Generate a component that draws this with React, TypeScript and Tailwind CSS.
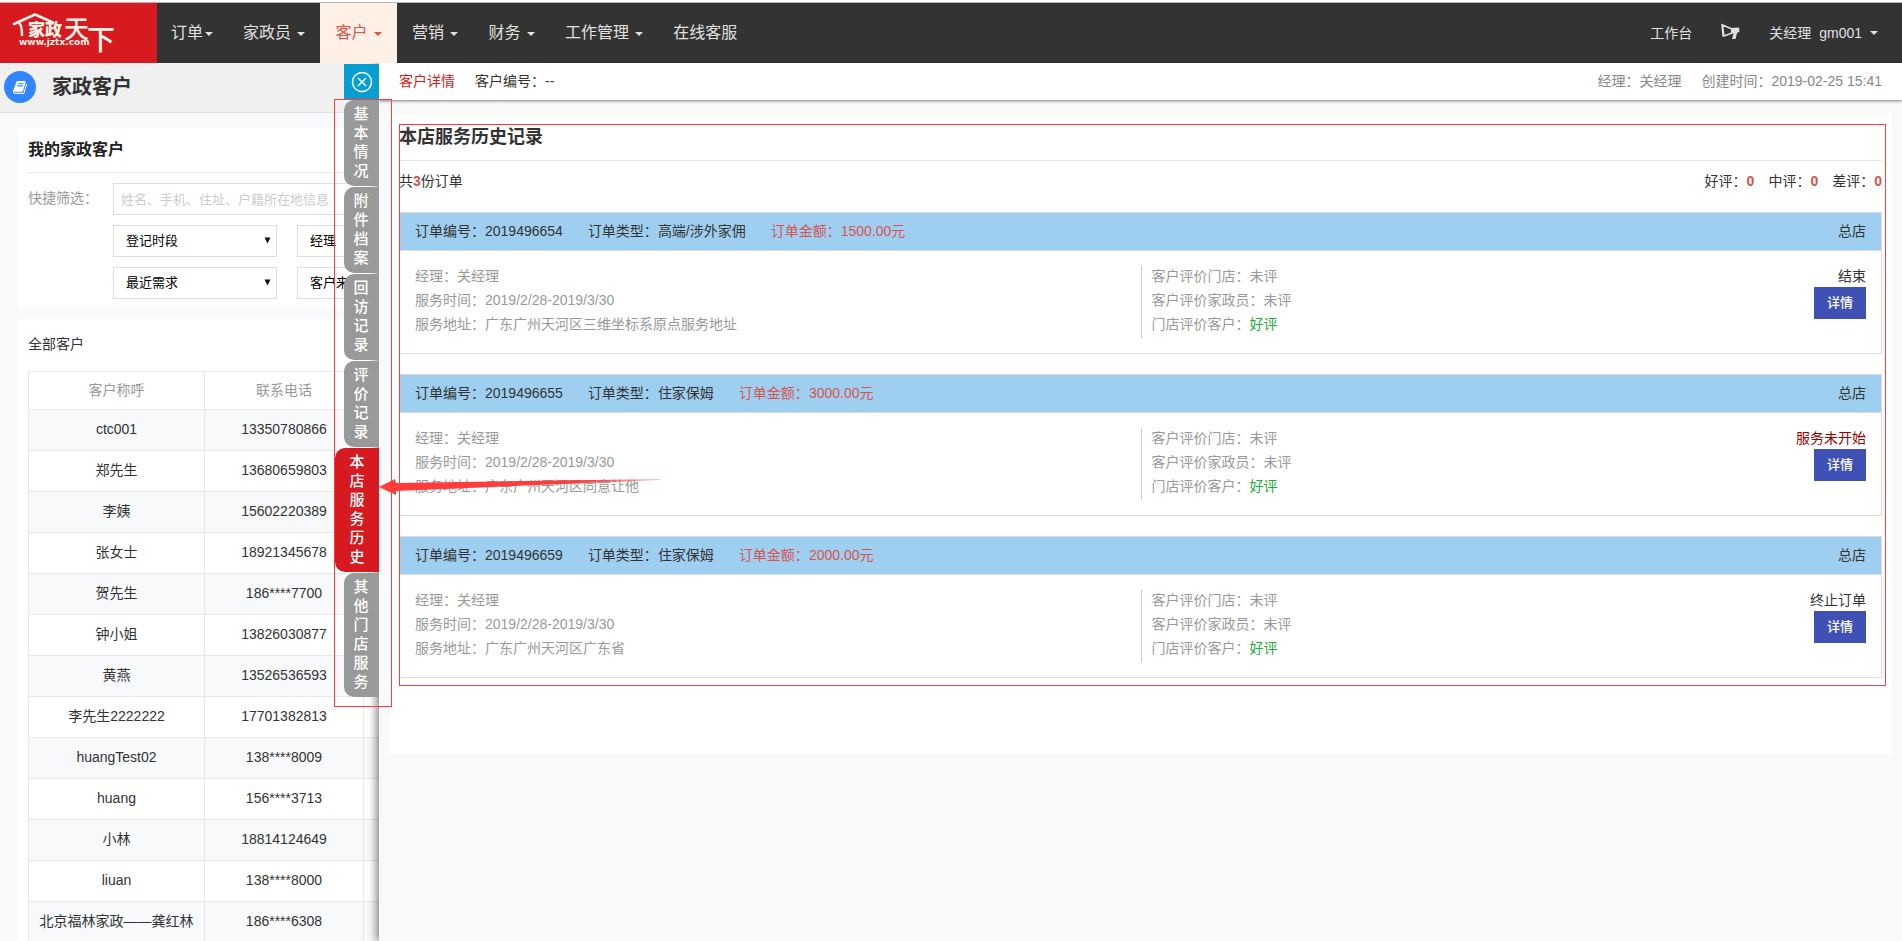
import React from 'react';

const menus = [
  { name: '家政员', active: false },
  { name: '客户', active: true },
  { name: '营销', active: false },
  { name: '财务', active: false },
  { name: '工作管理', active: false },
];

const customers = [
  ['ctc001', '13350780866'],
  ['郑先生', '13680659803'],
  ['李姨', '15602220389'],
  ['张女士', '18921345678'],
  ['贺先生', '186****7700'],
  ['钟小姐', '13826030877'],
  ['黄燕', '13526536593'],
  ['李先生2222222', '17701382813'],
  ['huangTest02', '138****8009'],
  ['huang', '156****3713'],
  ['小林', '18814124649'],
  ['liuan', '138****8000'],
  ['北京福林家政——龚红林', '186****6308'],
];

const tabs = [
  { name: '基本情况', active: false },
  { name: '附件档案', active: false },
  { name: '回访记录', active: false },
  { name: '评价记录', active: false },
  { name: '本店服务历史', active: true },
  { name: '其他门店服务', active: false },
];

const orders = [
  {
    id: '2019496654',
    type: '高端/涉外家佣',
    amount: '1500.00元',
    address: '广东广州天河区三维坐标系原点服务地址',
    status: '结束',
    statusClass: 'text-[#333]',
  },
  {
    id: '2019496655',
    type: '住家保姆',
    amount: '3000.00元',
    address: '广东广州天河区同意让他',
    status: '服务未开始',
    statusClass: 'text-[#990000]',
  },
  {
    id: '2019496659',
    type: '住家保姆',
    amount: '2000.00元',
    address: '广东广州天河区广东省',
    status: '终止订单',
    statusClass: 'text-[#333]',
  },
];

const Caret = () => (
  <span className="ml-0.5 inline-block border-x-4 border-t-4 border-x-transparent border-t-current align-middle" />
);

const Logo = () => (
  <svg width="157" height="60" viewBox="0 0 157 60" role="img" aria-label="家政天下">
    <path
      d="M14 21 L35 11.500 L53 19.500 M19 20 Q22 22 22 32"
      fill="none"
      stroke="#fff3e6"
      strokeWidth="2.500"
      strokeLinecap="round"
      strokeLinejoin="round"
    />
    <g fill="#fff3e6" fontFamily='"Noto Sans CJK SC", sans-serif'>
      <text x="28" y="33" fontSize="17" fontWeight="900">家政</text>
      <text x="64" y="35" fontSize="25" fontWeight="500">天</text>
      <text x="87" y="47" fontSize="28" fontWeight="500">下</text>
    </g>
    <text x="19" y="42" fontSize="9" fontFamily='"DejaVu Sans", sans-serif' fontWeight="700" fill="#fff3e6">
      www.jztx.com
    </text>
  </svg>
);

const Header = () => (
  <header className="relative z-20 flex h-[61px] shrink-0 border-t border-[#b5b5b5] bg-[#333] text-[#e0e0e0]">
    <a href="#home" className="block w-[157px] shrink-0 bg-[#d71920]">
      <Logo />
    </a>
    <nav className="flex text-base">
      <button className="pr-[15px] pl-3.5">
        订单
        <Caret />
      </button>
      {menus.map((item) => (
        <button key={item.name} className={`px-[15px] ${item.active ? 'bg-[#fff0e6] text-[#d9534f]' : ''}`}>
          {item.name} <Caret />
        </button>
      ))}
      <a href="#service" className="flex items-center px-[15px]">
        在线客服
      </a>
    </nav>
    <div className="ml-auto flex items-center pr-6 text-sm">
      <a href="#desk">工作台</a>
      <button className="mx-7 pb-0.5" aria-label="公告">
        <svg width="21" height="18" viewBox="0 0 21 18" className="block">
          <path d="M2.500 2 L12 6 L12 10 L4 13 Z" fill="none" stroke="#e0e0e0" strokeWidth="1.500" strokeLinejoin="round" />
          <path d="M2 1.500 L3 13" stroke="#e0e0e0" strokeWidth="1.500" strokeLinecap="round" />
          <path d="M11 5 L19 4.500 L19.500 8.500 L17 10 L15.500 16 L12 16 L13.500 10.500 L11 10 Z" fill="#e0e0e0" />
        </svg>
      </button>
      <button className="flex items-center">
        <span className="mr-2">关经理</span>
        <span className="mr-1.5">gm001</span>
        <Caret />
      </button>
    </div>
  </header>
);

const FilterSelect = ({ label }: { label: string }) => (
  <div className="relative w-[164px]">
    <select
      aria-label={label}
      className="h-8 w-full appearance-none border border-[#ddd] bg-white px-3 text-[13px] text-black"
    >
      <option>{label}</option>
    </select>
    <svg width="7" height="7" viewBox="0 0 7 7" className="pointer-events-none absolute top-3 right-1.5">
      <path d="M0.500 0.500 H6.500 L3.500 6.500 Z" fill="#111" />
    </svg>
  </div>
);

const CustomerPage = () => (
  <main className="w-[379px] shrink-0 overflow-hidden bg-[#f7f9fb]">
    <div className="flex h-[50px] w-[1000px] items-center gap-4 border-b border-[#e3e3e3] bg-[#f0f0f0] pb-px pl-1">
      <span className="flex size-8 items-center justify-center rounded-full bg-[#3385ff]">
        <svg width="15" height="15" viewBox="0 0 1792 1792" fill="#fff">
          <path d="M1639 478q40 57 18 129l-275 906q-19 64-76.500 107.500t-122.500 43.500h-923q-77 0-148.500-53.500t-99.500-131.500q-24-67-2-127 0-4 3-27t4-37q1-8-3-21.500t-3-19.500q2-11 8-21t16.500-23.500 16.500-23.500q23-38 45-91.500t30-91.500q3-10 .5-30t-.5-28q3-11 17-28t17-23q21-36 42-92t25-90q1-9-2.500-32t.5-28q4-13 22-30.500t22-22.500q19-26 42.500-84.500t27.500-96.500q1-8-3-25.500t-2-26.500q2-8 9-18t18-23 17-21q8-12 16.500-30.500t15-35 16-36 19.500-32 26.500-23.500 36-11.500 47.500 5.500l-1 3q38-9 51-9h761q74 0 114 56t18 130l-274 906q-36 119-71.500 153.500t-128.500 34.500h-869q-27 0-38 15-11 16-1 43 24 70 144 70h923q29 0 56-15.500t35-41.500l300-987q7-22 5-57 38 15 59 43zm-1064 2q-4 13 2 22.500t20 9.500h608q13 0 25.500-9.500t16.500-22.500l21-64q4-13-2-22.500t-20-9.500h-608q-13 0-25.500 9.500t-16.500 22.500zm-83 256q-4 13 2 22.500t20 9.500h608q13 0 25.500-9.500t16.500-22.500l21-64q4-13-2-22.500t-20-9.500h-608q-13 0-25.500 9.500t-16.500 22.500z" />
        </svg>
      </span>
      <h1 className="text-xl font-bold">家政客户</h1>
    </div>

    {/* 筛选 */}
    <section className="mt-[15px] ml-[18px] w-[1000px] bg-white px-2.5 pb-2.5">
      <h2 className="border-b border-[#e8e8e8] py-2.5 text-base leading-6 font-bold text-[#222]">我的家政客户</h2>
      <div className="mt-2.5 flex">
        <label htmlFor="keyword" className="w-[85px] pt-[5px] leading-5 text-[#999]">
          快捷筛选：
        </label>
        <div className="flex flex-col gap-2.5">
          <input
            id="keyword"
            type="text"
            placeholder="姓名、手机、住址、户籍所在地信息"
            className="h-8 w-[348px] border border-[#ddd] px-[7px] text-[13px] placeholder:text-[#ccc]"
          />
          <div className="flex gap-5">
            <FilterSelect label="登记时段" />
            <FilterSelect label="经理" />
          </div>
          <div className="flex gap-5">
            <FilterSelect label="最近需求" />
            <FilterSelect label="客户来源" />
          </div>
        </div>
      </div>
    </section>

    {/* 客户列表 */}
    <section className="mt-2.5 ml-[18px] w-[1000px] bg-white px-2.5 pt-[15px]">
      <h3 className="leading-5">全部客户</h3>
      <table className="mt-[17px] w-full table-fixed border-collapse text-center">
        <thead>
          <tr className="h-[38px] text-[#999]">
            <th className="w-44 border border-[#e8e8e8] pb-0.5 font-normal">客户称呼</th>
            <th className="w-[159px] border border-[#e8e8e8] pb-0.5 font-normal">联系电话</th>
            <th className="border border-[#e8e8e8]"></th>
          </tr>
        </thead>
        <tbody>
          {customers.map(([name, phone]) => (
            <tr key={name} className="h-[41px] odd:bg-[#f7f9fb]">
              <td className="border border-[#e8e8e8] pb-0.5">{name}</td>
              <td className="border border-[#e8e8e8] pb-0.5">{phone}</td>
              <td className="border border-[#e8e8e8]"></td>
            </tr>
          ))}
        </tbody>
      </table>
    </section>
  </main>
);

const DrawerTabs = () => (
  <div className="absolute top-px right-full flex flex-col items-end gap-px">
    <button aria-label="关闭" className="flex size-[35px] items-center justify-center bg-[#079fd1]">
      <svg width="22" height="22" viewBox="0 0 22 22" fill="none" stroke="#fff" strokeWidth="1.500">
        <circle cx="11" cy="11" r="9.500" />
        <path d="M7 7 L15 15 M15 7 L7 15" />
      </svg>
    </button>
    {tabs.map((tab) => (
      <button
        key={tab.name}
        className={`flex flex-col items-center rounded-l-[10px] pt-1 pb-1.5 text-[15px] leading-[19px] font-medium text-white ${
          tab.active ? 'w-11 bg-[#d71920]' : 'w-[35px] bg-[#999] pr-px'
        }`}
      >
        {tab.name.split('').map((char, i) => (
          <span key={i}>{char}</span>
        ))}
      </button>
    ))}
  </div>
);

const OrderCard = ({ order }: { order: (typeof orders)[number] }) => (
  <article className="border border-[#dcdcdc]">
    <div className="flex h-[38px] items-center gap-[25px] border-b border-[#dcdcdc] bg-[#9fcff0] px-[15px] pb-0.5">
      <span>订单编号：{order.id}</span>
      <span>订单类型：{order.type}</span>
      <span className="text-[#d9534f]">订单金额：{order.amount}</span>
      <span className="ml-auto">总店</span>
    </div>
    <div className="grid grid-cols-2 p-[15px] leading-[21px] text-[#999]">
      <div className="flex flex-col gap-[3px] pb-[3px]">
        <p>经理：关经理</p>
        <p>服务时间：2019/2/28-2019/3/30</p>
        <p>服务地址：{order.address}</p>
      </div>
      <div className="flex justify-between border-l border-[#ccc] pl-2.5">
        <div className="flex flex-col gap-[3px] pb-[3px]">
          <p>客户评价门店：未评</p>
          <p>客户评价家政员：未评</p>
          <p>
            门店评价客户：<span className="text-[#22ac38]">好评</span>
          </p>
        </div>
        <div className="flex flex-col items-end">
          <span className={order.statusClass}>{order.status}</span>
          <button className="h-8 w-[52px] bg-[#3f51b5] pb-0.5 text-[13px] font-medium text-white">详情</button>
        </div>
      </div>
    </div>
  </article>
);

const Drawer = () => (
  <section className="relative z-10 flex-1 bg-[#f7f9fb] shadow-[-3px_0_8px_rgba(0,0,0,0.45)]">
    <DrawerTabs />
    <div className="flex h-[37px] items-center gap-5 bg-white px-5 pb-0.5 shadow-[0_1px_3px_rgba(0,0,0,0.5)]">
      <span className="text-[#d71920]">客户详情</span>
      <span>客户编号：--</span>
      <span className="ml-auto text-[#888]">经理：关经理</span>
      <span className="text-[#888]">创建时间：2019-02-25 15:41</span>
    </div>

    <div className="mx-2.5 mt-[13px] min-h-[641px] bg-white px-2.5 pt-2.5">
      <h2 className="border-b border-[#e8e8e8] pt-0.5 pb-[11px] text-lg leading-6 font-bold">本店服务历史记录</h2>
      <div className="flex gap-3.5 pt-2.5 pb-[21px] leading-5">
        <span className="mr-auto">
          共<b className="text-[#d9534f]">3</b>份订单
        </span>
        <span>
          好评：<b className="text-[#d9534f]">0</b>
        </span>
        <span>
          中评：<b className="text-[#d9534f]">0</b>
        </span>
        <span>
          差评：<b className="text-[#d9534f]">0</b>
        </span>
      </div>
      <div className="flex flex-col gap-5">
        {orders.map((order) => (
          <OrderCard key={order.id} order={order} />
        ))}
      </div>
    </div>

    {/* 标注框和箭头 */}
    <div className="pointer-events-none absolute top-9 -left-[45px] h-[608px] w-[58px] border border-[#ff3b3b]" />
    <div className="pointer-events-none absolute top-[61px] right-4 left-5 h-[562px] border border-[#ff3b3b]" />
    <svg width="282" height="18" viewBox="0 0 282 18" className="pointer-events-none absolute top-[415px] left-0">
      <defs>
        <linearGradient id="tail" x1="0" x2="1">
          <stop offset="0.7" stopColor="#ff3b3b" />
          <stop offset="1" stopColor="#ff3b3b" stopOpacity="0.3" />
        </linearGradient>
      </defs>
      <path d="M0 9 L16 1 L17 5 L281 1 L281 2 L17 13 L17 17 Z" fill="url(#tail)" />
    </svg>
  </section>
);

export default function App() {
  return (
    <div className="flex h-screen flex-col overflow-hidden bg-white pt-0.5 font-['Liberation_Sans','Noto_Sans_CJK_SC',sans-serif] text-sm text-[#333]">
      <Header />
      <div className="flex min-h-0 flex-1">
        <CustomerPage />
        <Drawer />
      </div>
    </div>
  );
}
